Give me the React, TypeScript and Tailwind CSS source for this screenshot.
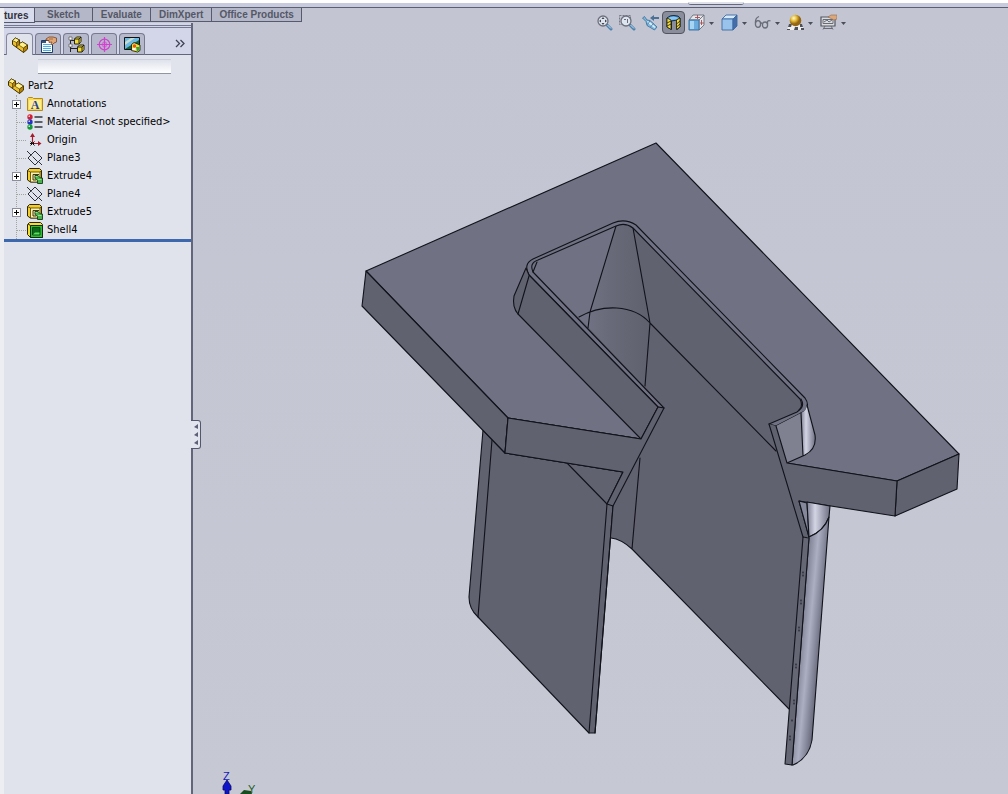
import type { ReactNode } from "react";

const ribbonTabs = ["Sketch", "Evaluate", "DimXpert", "Office Products"];

type TreeItem = { label: string; icon: ReactNode; expandable?: boolean };

const treeItems: TreeItem[] = [
  { label: "Annotations", icon: <AnnotationsIcon />, expandable: true },
  { label: "Material <not specified>", icon: <MaterialIcon /> },
  { label: "Origin", icon: <OriginIcon /> },
  { label: "Plane3", icon: <PlaneIcon /> },
  { label: "Extrude4", icon: <ExtrudeIcon />, expandable: true },
  { label: "Plane4", icon: <PlaneIcon /> },
  { label: "Extrude5", icon: <ExtrudeIcon />, expandable: true },
  { label: "Shell4", icon: <ShellIcon /> },
];

const panelTabs = [
  { label: "Properties", icon: <PropertyIcon /> },
  { label: "Configurations", icon: <ConfigIcon /> },
  { label: "Dimensions", icon: <TargetIcon /> },
  { label: "Appearances", icon: <DisplayIcon /> },
];

export default function App() {
  return (
    <div className="flex h-screen flex-col overflow-hidden bg-[#c5c8d3] font-['DejaVu_Sans_Condensed','DejaVu_Sans',sans-serif] text-[11px] text-black">
      <TopEdge />
      <div className="flex min-h-0 flex-1 border-l-4 border-[#eceef2]">
        <div className="relative z-10 flex w-[189px] shrink-0 flex-col">
          <RibbonTabs />
          <FeaturePanel />
          <button
            aria-label="Collapse panel"
            className="absolute top-[412px] left-[187px] flex h-[29px] w-[10px] flex-col items-center justify-center gap-[3px] rounded-r-[3px] border border-l-0 border-[#54576c] bg-[#e2e5ee]"
          >
            <LeftArrow />
            <LeftArrow />
            <LeftArrow />
          </button>
        </div>
        <main className="relative min-w-0 flex-1 bg-linear-to-b from-[#c3c6d2] to-[#c6c9d4]">
          <Model />
          <ViewToolbar />
        </main>
      </div>
    </div>
  );
}

function TopEdge() {
  return (
    <header className="relative h-2 shrink-0 border-t-3 border-b border-t-white border-b-[#5c5f70] bg-[#c8cade]">
      <div className="absolute right-[264px] -top-px h-[3px] w-[56px] rounded-b-[3px] border-b border-[#666979] bg-[#dfe1ea]" />
    </header>
  );
}

function RibbonTabs() {
  return (
    <nav className="flex h-[15px] w-[299px] shrink-0 font-['Liberation_Sans',Arial,sans-serif] text-[10px] leading-[13px] font-bold whitespace-nowrap">
      <button className="w-[31px] shrink-0 border-r border-b border-[#575a6c] bg-[#d9dcec] pr-[7px] text-right text-[#30323d]">
        tures
      </button>
      <div className="flex h-[14px] border-b border-[#575a6c] bg-[#b4b7c8] text-[#555767]">
        {ribbonTabs.map((tab) => (
          <button key={tab} className="border-r border-[#575a6c] px-2 first:px-3 last:px-[7px]">
            {tab}
          </button>
        ))}
      </div>
    </nav>
  );
}

function FeaturePanel() {
  return (
    <aside className="flex min-h-0 flex-1 flex-col border-r-2 border-[#63667a] bg-[#e0e3ec]">
      <div className="flex h-8 shrink-0 flex-col justify-between border-b border-[#63667a] bg-[#d3d6e9]">
        <div className="mt-[2px] h-[3px] border-y border-[#747790]" />
        <div className="-mb-px flex items-end gap-[2px] pl-[2px]">
          <button
            aria-label="Feature tree"
            className="flex h-[22px] w-[27px] items-center justify-center rounded-t-[4px] border border-b-0 border-[#85889c] bg-[#e0e3ec]"
          >
            <PartIcon />
          </button>
          {panelTabs.map((tab) => (
            <button
              key={tab.label}
              aria-label={tab.label}
              className="flex h-[22px] w-[26px] items-center justify-center rounded-t-[4px] border border-[#777a8f] border-b-[#63667a] bg-[#b6b9cb]"
            >
              {tab.icon}
            </button>
          ))}
          <button aria-label="More" className="mr-[6px] mb-[7px] ml-auto">
            <svg width="10" height="9" viewBox="0 0 10 9" fill="none" stroke="#3f4254" strokeWidth="1.3">
              <path d="M1 1l3.5 3.5L1 8M5.500 1L9 4.500 5.500 8" />
            </svg>
          </button>
        </div>
      </div>
      <input
        aria-label="Filter"
        className="mt-1 mr-[20px] ml-[34px] h-[15px] shrink-0 border-t border-b border-[#cdd0da] border-b-[#9295a4] bg-linear-to-b from-[#dfe2ec] to-white outline-none"
      />
      <div className="mt-[3px] shrink-0 border-b-3 border-[#3e68ae]">
        <div className="flex h-[18px] items-center gap-1 pl-1">
          <PartIcon />
          <span className="pt-px">Part2</span>
        </div>
        <ul className="ml-3 border-l border-dotted border-[#a2a59c]">
          {treeItems.map((item) => (
            <TreeRow key={item.label} {...item} />
          ))}
        </ul>
      </div>
    </aside>
  );
}

function TreeRow({ label, icon, expandable }: TreeItem) {
  return (
    <li className="flex h-[18px] items-center whitespace-nowrap">
      {expandable ? (
        <button
          aria-label={`Expand ${label}`}
          className="-ml-[5px] mr-[6px] flex size-[9px] items-center justify-center border border-[#8c8f9b] bg-white"
        >
          <svg width="5" height="5" viewBox="0 0 5 5" stroke="#000" shapeRendering="crispEdges">
            <path d="M0 2.500h5M2.500 0v5" />
          </svg>
        </button>
      ) : (
        <span className="mr-px w-[9px] border-t border-dotted border-[#a2a59c]" />
      )}
      {icon}
      <span className="ml-1 pt-px">{label}</span>
    </li>
  );
}

function ViewToolbar() {
  return (
    <div className="absolute top-[2px] right-[162px] flex h-6 items-center">
      <button aria-label="Zoom to fit" className="mr-[6px]"><ZoomIcon /></button>
      <button aria-label="Zoom to area" className="mr-[6px]"><ZoomIcon area /></button>
      <button aria-label="Previous view" className="mr-[3px]"><PreviousIcon /></button>
      <button
        aria-label="Section view"
        className="mr-[3px] flex size-[23px] items-center justify-center rounded-[4px] border border-[#52555f] bg-[#8a8d9b]"
      >
        <SectionIcon />
      </button>
      <MenuButton label="View orientation"><OrientationIcon /></MenuButton>
      <MenuButton label="Display style"><CubeIcon /></MenuButton>
      <MenuButton label="Hide or show items"><GlassesIcon /></MenuButton>
      <MenuButton label="Apply scene"><SceneIcon /></MenuButton>
      <MenuButton label="View settings"><ScreenIcon /></MenuButton>
    </div>
  );
}

function MenuButton({ label, children }: { label: string; children: ReactNode }) {
  return (
    <button aria-label={label} className="mr-[7px] flex items-center gap-1 last:mr-0">
      {children}
      <svg width="5" height="3" viewBox="0 0 5 3" className="mt-[2px] fill-[#4b4d59]">
        <path d="M0 0h5L2.500 3z" />
      </svg>
    </button>
  );
}

function LeftArrow() {
  return (
    <svg width="4" height="5" viewBox="0 0 4 5" className="shrink-0 fill-[#5d6077]">
      <path d="M4 0v5L0 3z" />
    </svg>
  );
}

function PartIcon() {
  return (
    <svg width="16" height="16" viewBox="0 0 16 16" className="shrink-0" stroke="#3a2d00" strokeLinejoin="round">
      <path fill="#eec12a" d="M.500 3.500L3.500 1l4 2v3.500L10.500 5l5 3v4l-4 3.500L.500 7.500z" />
      <path fill="#fff08a" strokeWidth=".6" d="M.500 3.500L3.500 1l4 2-3 2.500z" />
      <path fill="#fff08a" strokeWidth=".6" d="M7.500 6.500l3-1.500 5 3-4 3-4-2.500z" />
      <path fill="#b58308" strokeWidth=".6" d="M11.500 11l4-3v4l-4 3.500zM4.500 5.500l3-2.500v4l-3 3z" />
    </svg>
  );
}

function PropertyIcon() {
  return (
    <svg width="17" height="17" viewBox="0 0 17 17">
      <path fill="#f8fcff" stroke="#1c3b66" d="M1.500 4.500h11v12h-11z" />
      <path stroke="#4db0e4" d="M3 8.500h8M3 10.500h8M3 12.500h8M3 14.500h8" />
      <path fill="#3b5674" d="M2 5h4v2H2z" />
      <path fill="#e2a777" stroke="#784424" strokeWidth=".8" d="M6 3l3-2h4l3.500 1v4L14 7l-2 2-1-1 1-2-3 .500V4.500L6 4z" />
      <path stroke="#784424" strokeWidth=".6" d="M9 3h4" />
    </svg>
  );
}

function ConfigIcon() {
  return (
    <svg width="17" height="17" viewBox="0 0 17 17" fill="none">
      <path stroke="#222" d="M2.500 1v15M2.500 4.500H7M2.500 12.500H9" />
      <path fill="#fff" stroke="#555" strokeWidth=".7" d="M1 1h3v3H1zM1 8h3v3H1z" />
      <g fill="#f4dc38" stroke="#111" strokeWidth=".9">
        <path d="M6.500 3l2-2H13v4.500L11 8H6.500z" />
        <path d="M6.500 3H11v5M11 3l2-2" />
        <path d="M9.500 11l2-2H16v4.500L14 16H9.500z" />
        <path d="M9.500 11H14v5M14 11l2-2" />
      </g>
    </svg>
  );
}

function TargetIcon() {
  return (
    <svg width="17" height="17" viewBox="0 0 17 17" fill="none" stroke="#cf43ce" strokeWidth="1.200">
      <circle cx="8.500" cy="8.500" r="5.300" />
      <path d="M8.500 1v15M1 8.500h15" />
      <circle cx="8.500" cy="8.500" r="2.500" fill="#d88bda" strokeWidth=".5" />
      <path d="M8.500 5v7M5 8.500h7" />
    </svg>
  );
}

function DisplayIcon() {
  return (
    <svg width="17" height="17" viewBox="0 0 17 17">
      <path fill="#6cbbe6" stroke="#111" d="M.500 1.500h15v12H.500z" />
      <path fill="#12663d" d="M1 13L15 4v9z" />
      <path fill="#f3edc0" d="M1 6l6-4h4L1 9z" opacity=".7" />
      <path fill="#f3dd32" stroke="#111" strokeWidth=".8" d="M7.500 8.500l2.500-2 6 2.500v5.500L13.500 16l-6-1.500z" />
      <circle cx="10.500" cy="10" r="1.700" fill="#e4522c" />
      <path fill="#30a342" d="M12 11h3.500v3l-2.500 1.500z" />
      <path fill="#fff" d="M8.500 12h3v2h-3z" />
    </svg>
  );
}

function AnnotationsIcon() {
  return (
    <svg width="16" height="16" viewBox="0 0 16 16" className="shrink-0">
      <path fill="#fbd84d" stroke="#b58b18" d="M.500 2.500l1-1h4l1 1h9v12H.500z" />
      <path fill="#ffec96" d="M2 4h12v9H2z" />
      <text x="8" y="13" textAnchor="middle" fontSize="12" fontWeight="700" fill="#25459a" fontFamily="Liberation Serif, serif">
        A
      </text>
    </svg>
  );
}

function MaterialIcon() {
  return (
    <svg width="16" height="16" viewBox="0 0 16 16" className="shrink-0">
      <path stroke="#33363f" strokeWidth="1.500" d="M7.500 3h8M7.500 8h8M7.500 13h8" />
      <circle cx="3" cy="3" r="2.700" fill="#d51e30" />
      <circle cx="3" cy="8" r="2.700" fill="#2635bf" />
      <circle cx="3" cy="13" r="2.700" fill="#149a39" />
      <path fill="#fff" opacity=".8" d="M1.500 1.500H3V3H1.500zM1.500 6.500H3V8H1.500zM1.500 11.500H3V13H1.500z" />
    </svg>
  );
}

function OriginIcon() {
  return (
    <svg width="16" height="16" viewBox="0 0 16 16" className="shrink-0">
      <path fill="none" stroke="#a31e2d" strokeWidth="1.200" d="M5.500 11V2M5.500 11.500H13" />
      <path fill="#a31e2d" d="M3 5l2.500-4L8 5zM11 9l3.500 2.500L11 14z" />
      <path stroke="#111" strokeWidth="1" d="M3.500 9.500l4 4M7.500 9.500l-4 4M3 11.500h4" />
    </svg>
  );
}

function PlaneIcon() {
  return (
    <svg width="16" height="16" viewBox="0 0 16 16" className="shrink-0" fill="none" stroke="#2c2e38" strokeWidth="1">
      <path d="M1 8l7-7 7 7-7 7zM0 1l4.500 4.500M5.500 6.500l5 5M12 12l3 3" />
    </svg>
  );
}

function ExtrudeIcon() {
  return (
    <svg width="16" height="16" viewBox="0 0 16 16" className="shrink-0" strokeLinejoin="round">
      <path fill="#f2cd2c" stroke="#2d2505" d="M.500 2.500l2-2h10l2 2V14h-11l-3-2z" />
      <path fill="#fff2a0" stroke="#2d2505" strokeWidth=".7" d="M3.500 4h9.500v10H3.500z" />
      <path fill="none" stroke="#2d2505" strokeWidth=".7" d="M3.500 4L.500 2.500M13 4l1.500-1.500" />
      <path fill="#f0dfa8" stroke="#2d2505" strokeWidth=".9" d="M12 6.500H6V12h3" />
      <path fill="#4ab14c" stroke="#123c16" strokeWidth=".9" d="M8 7.500h3l2.500 2.500h2v5.500h-5v-3L8 10.500z" />
      <path fill="#9be08f" d="M11 11h3.500v1H11zM8.500 8h2v1h-2z" />
    </svg>
  );
}

function ShellIcon() {
  return (
    <svg width="16" height="16" viewBox="0 0 16 16" className="shrink-0" strokeLinejoin="round">
      <path fill="#f5dc31" stroke="#2d2505" d="M.500 2.500l2-2h11l2 2v13h-12l-3-3z" />
      <path fill="#2fbd36" stroke="#102d10" d="M3.500 3.500h12v12h-12z" />
      <path fill="#0d681b" stroke="#063b0d" strokeWidth=".8" d="M5.500 5.500h7.500V13H5.500z" />
      <path fill="#58e05b" d="M6 12.500l2-2h4.500v2z" />
      <path stroke="#2d2505" d="M3.500 3.500L1 2" />
    </svg>
  );
}

function ZoomIcon({ area = false }: { area?: boolean }) {
  return (
    <svg width="17" height="17" viewBox="0 0 17 17" fill="none">
      <path stroke="#4f82ab" strokeWidth="3" strokeLinecap="round" d="M11 11l4 4" />
      <path stroke="#c0e2f7" strokeWidth="1" d="M11.500 11l3.500 3.500" />
      {area && <path stroke="#777a85" strokeDasharray="2 1" d="M.500 1.500h11v9H.500z" />}
      <circle cx="7" cy="7" r="5" fill="#dfe5ee" stroke="#6c707d" strokeWidth="1.300" />
      {area ? (
        <path stroke="#696d79" d="M5 5.500h2M8.500 5v4" />
      ) : (
        <path fill="#41444f" d="M7 3l1.500 2h-3zM7 11L5.500 9h3zM3 7l2-1.500v3zM11 7L9 5.500v3z" />
      )}
    </svg>
  );
}

function PreviousIcon() {
  return (
    <svg width="17" height="17" viewBox="0 0 17 17">
      <path fill="#7fb9df" stroke="#376b96" strokeWidth=".8" d="M.500 4l2-1.500L5 6l3 .500 7 6.500-2.500 3L5 11.500l-1-4z" />
      <path fill="#d7f1ff" d="M5 7l3 1 5.500 5-1 1L6 9z" />
      <path fill="none" stroke="#496f93" strokeWidth=".8" d="M5.500 10.500L8 7M8.500 13l3-3.500" />
      <path fill="#4c7196" d="M8 4l4-3v2h5v2h-5v2z" />
    </svg>
  );
}

function SectionIcon() {
  return (
    <svg width="17" height="17" viewBox="0 0 17 17">
      <path fill="#3e8bc7" stroke="#162c44" d="M2 4q3-3 7-2.500 5 0 6 2.500v9l-3 2.500V6L6.500 7v8.500L2 13z" />
      <path fill="#8ac6ee" d="M3 4q5-3 11 0l-3 1.500-5 .500z" />
      <path fill="#f8dc2f" stroke="#1b1b18" strokeWidth=".8" d="M2 4l4 2v9.500L2 13zM11.500 6l3.500-2v9l-3.500 2.500z" />
      <path fill="none" stroke="#1b1b18" strokeWidth=".8" d="M2 9l4-2M2 12l4-2M11.500 10L15 7M11.500 13l3.500-3" />
    </svg>
  );
}

function OrientationIcon() {
  return (
    <svg width="17" height="17" viewBox="0 0 17 17" strokeWidth=".9">
      <path fill="#e8e5e8" stroke="#65717c" d="M1 6l4-5h11v10l-5 5V6z" />
      <path fill="#6babdd" stroke="#316b9c" d="M1 6h10v10H1z" />
      <path fill="#a7d5f2" d="M2 7h4v8H2z" />
      <path fill="none" stroke="#a34e53" d="M7 3.500h5M9.500 1v4M12 9h4M13.500 6v5" />
      <path fill="none" stroke="#65717c" d="M11 6l5-5" />
    </svg>
  );
}

function CubeIcon() {
  return (
    <svg width="17" height="17" viewBox="0 0 17 17" stroke="#3d6aa3" strokeWidth=".9" strokeLinejoin="round">
      <path fill="#d5eafa" d="M1 5l4-4h11l-4 4z" />
      <path fill="#9ac3ec" d="M1 5h11v11H1z" />
      <path fill="#456da9" d="M12 5l4-4v11l-4 4z" />
    </svg>
  );
}

function GlassesIcon() {
  return (
    <svg width="17" height="17" viewBox="0 0 17 17" fill="none" stroke="#696c79" strokeWidth="1.300">
      <ellipse cx="4" cy="10" rx="2.600" ry="3.300" />
      <ellipse cx="11" cy="11" rx="2.600" ry="3" />
      <path d="M1.500 9Q1 4 5 2.500M6.500 9.500q1-1 2 0M13.500 10V7.500q1-1.500 3-.500" />
    </svg>
  );
}

function SceneIcon() {
  return (
    <svg width="17" height="17" viewBox="0 0 17 17">
      <defs>
        <radialGradient id="gold" cx=".35" cy=".3">
          <stop stopColor="#fffbd0" />
          <stop offset=".5" stopColor="#e7bd3a" />
          <stop offset="1" stopColor="#946513" />
        </radialGradient>
      </defs>
      <path fill="#efefef" d="M2 10h13l2 6H0z" />
      <path fill="#4d4f59" d="M2 10h3l-1 3H1zM8 13h3v3H7zM13 10h2l1 3h-3zM0 15h3v1H0zM14 14h3v2h-3z" />
      <circle cx="8.500" cy="6.500" r="5.800" fill="url(#gold)" />
    </svg>
  );
}

function ScreenIcon() {
  return (
    <svg width="17" height="17" viewBox="0 0 17 17">
      <path fill="#dadddf" stroke="#54575f" strokeWidth="1.200" d="M1 3h14v9H1z" />
      <path fill="none" stroke="#686b75" d="M3 5.500h10v4H3zM4 8l3-2 2 2 3-2M5 12l-2 3.500M11 12l2 3.500M4 14.500h8" />
      <path fill="#dda778" stroke="#8c6a50" strokeWidth=".6" d="M8 3l3-2h6v4l-3 1-2-1z" />
    </svg>
  );
}

// Shaded view of the part, with the axis triad in the lower left corner
function Model() {
  return (
    <svg
      className="block h-full w-full"
      viewBox="193 8 815 786"
      preserveAspectRatio="xMinYMin slice"
      role="img"
      aria-label="Part2"
    >
      <defs>
        <linearGradient id="cone">
          <stop stopColor="#707283" />
          <stop offset=".35" stopColor="#686a79" />
          <stop offset="1" stopColor="#5f616e" />
        </linearGradient>
        <linearGradient id="fillet">
          <stop stopColor="#7d7f93" />
          <stop offset=".35" stopColor="#d3d4e4" />
          <stop offset="1" stopColor="#6e7083" />
        </linearGradient>
        <linearGradient id="leg" gradientUnits="userSpaceOnUse" x1="797" y1="650" x2="819" y2="652">
          <stop stopColor="#74768a" />
          <stop offset=".5" stopColor="#acaec2" />
          <stop offset="1" stopColor="#6c6e80" />
        </linearGradient>
      </defs>
      <g stroke="#11121a" strokeWidth="1.100" strokeLinejoin="round" strokeLinecap="round">
        {/* left leg */}
        <path fill="#60626f" d="M483 430L469 597Q469 609 478 617L589 733L595 733L613 506L623 472L505 453Z" />
        <path fill="none" d="M492 440L478 617M607 504L589 733" />

        {/* plate */}
        <path fill="#707283" d="M366 271L656 143L959 454L897 481L787 463L641 439L508 418Z" />
        <path fill="#60626f" d="M366 271L508 418L505 453L362 306Z" />
        <path fill="#60626f" stroke="none" d="M508 418L641 439L664 408L613 506L607 504L623 472L505 453Z" />
        <path fill="none" d="M641 439L508 418L505 453L623 472L607 504L567 463" />
        <path fill="#60626f" d="M897 481L959 454L957 489L895 516Z" />

        {/* pocket and rear wall */}
        <path
          fill="#60626f"
          stroke="none"
          d="M531 267L616 226Q625 222 633 228L801 401Q803 409 797 412L769 424L787 463L804 537L790 710L632 549Q621 539 611 538L613 506L664 408L533 272Z"
        />
        <path fill="#707283" stroke="none" d="M533 272Q529 264 538 260L616 226L590 312L589 328Z" />
        <path fill="url(#cone)" stroke="none" d="M616 226Q625 222 633 228L650 323L645 387L589 328L590 312Z" />
        <path fill="none" d="M616 226L590 312L588 328M633 228L650 323L645 386M579 317C602 304 633 304 650 323L776 451M640 458L632 549M611 538Q621 539 632 549L789 709" />
        <path fill="none" d="M613 506L595 733" />

        {/* rim */}
        <path
          fill="#707283"
          fillRule="evenodd"
          d="M658 407L529 275Q523 264 533 259L613 223Q625 218 636 225L805 398Q810 405 805 411L776 426L769 424L797 412Q804 407 800 399L633 228Q625 222 616 226L538 260Q529 263 533 272L664 408Z"
        />
        <path fill="none" d="M537 262L533 272M801 399Q805 406 799 410" />

        {/* outside of the left boss */}
        <path fill="#60626f" d="M526 268L514 296Q512 307 518 314L641 439L658 407L529 275Z" />
        <path fill="none" d="M529 276L518 314" />
        <path fill="#60626f" stroke="none" d="M658 407L664 408L613 506L607 504L623 472L505 453L508 418L641 439Z" />
        <path fill="none" d="M658 407L664 408L613 506M658 407L641 439L508 418L505 453L623 472L607 504L613 506" />

        {/* right boss */}
        <path fill="#60626f" stroke="none" d="M769 424L776 426L787 463L897 481L895 516L799 501L809 537L803 537Z" />
        <path fill="#7f8191" stroke="none" d="M776 426L801 413L803 456L787 463Z" />
        <path fill="url(#fillet)" stroke="none" d="M801 413Q807 410 807 405L815 435Q817 451 803 456Z" />
        <path fill="none" d="M801 413L803 456M807 405L815 435Q817 449 805 455L787 463L776 426M769 424L803 537M787 463L897 481L895 516L799 501L809 537" />

        {/* right leg */}
        <path fill="#85879a" d="M799 501L807 503L809 537Z" />
        <path fill="url(#fillet)" d="M807 502L830 506L829 517Q824 531 809 537Z" />
        <path fill="url(#leg)" d="M809 537Q824 531 829 517L812 740Q809 758 793 765L792 765Z" />
        <path fill="#656775" d="M803 537L809 538L792 765L785 764Z" />
        <path
          fill="none"
          strokeWidth="1"
          strokeDasharray="1 2"
          d="M803 572v5M801 600v4M799 627v5M796 664v4M794 700v4M792 720v3M790 736v4"
        />
      </g>

      <g>
        <text x="223" y="780" fontSize="11" fill="#1718b8" fontFamily="Liberation Sans, sans-serif">Z</text>
        <text x="248" y="793" fontSize="11" fill="#1c5e26" fontFamily="Liberation Sans, sans-serif">Y</text>
        <path fill="#1014c9" stroke="#080968" strokeWidth=".8" d="M227 780L231 786V790H229V794H225V790H223V786Z" />
        <path fill="#174e20" d="M240 794L244 790L251 791L252 794Z" />
      </g>
    </svg>
  );
}
